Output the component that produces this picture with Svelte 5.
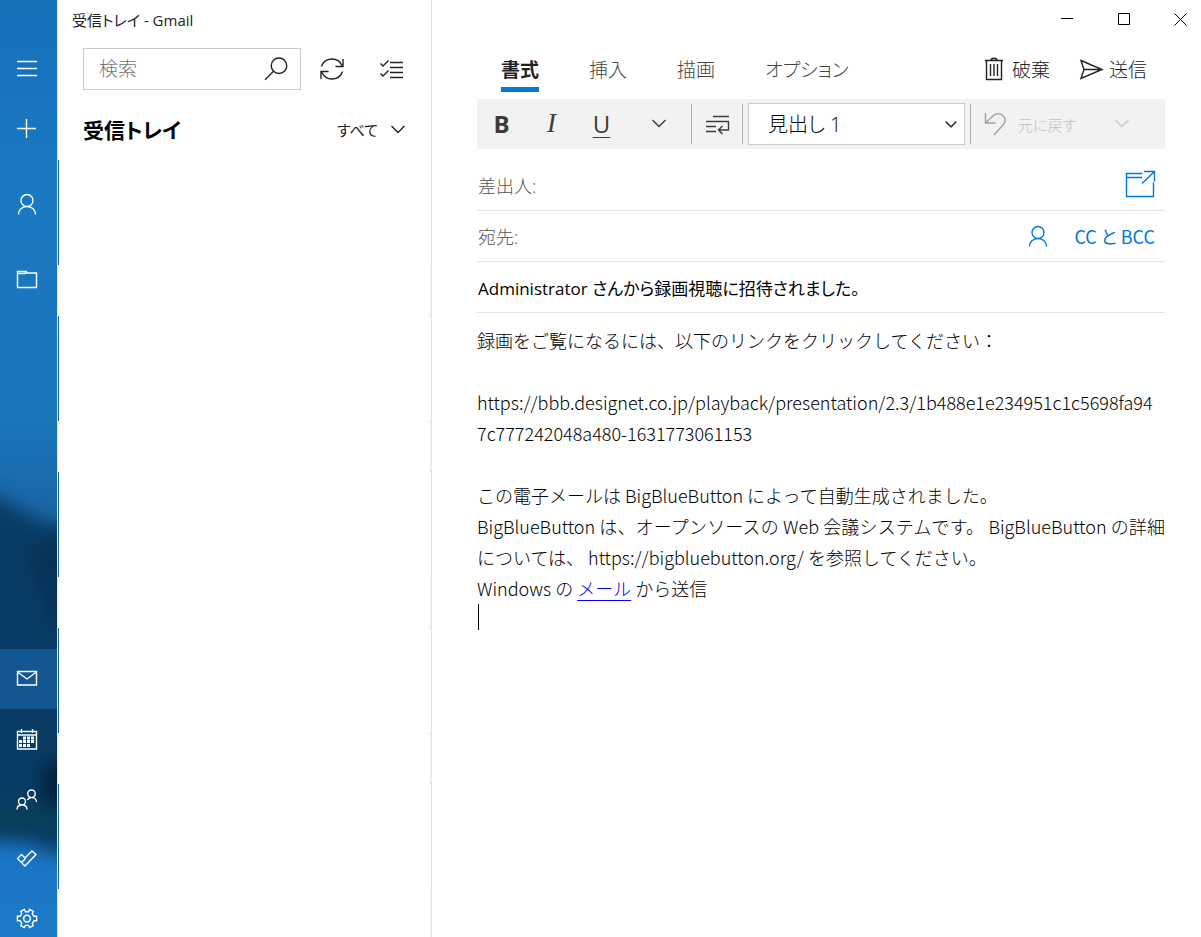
<script lang="ts">
  type IconName = keyof typeof icons;

  type RailItem = {
    label: string;
    icon: IconName;
    active?: boolean;
  };

  // every icon is drawn on a 32px grid
  const icons = {
    menu: "M6 9.500h20M6 16.500h20M6 23.500h20",
    add: "M6 16.500h19M15.500 7v19",
    person:
      "M16 6.500a6 6 0 1 1 0 12a6 6 0 1 1 0 -12M7.500 26.500c0 -4.500 3.500 -8 8.500 -8s8.500 3.500 8.500 8",
    folder: "M6.500 7.500h9v1.500h10v14.500h-19zM6.500 9.500h7.500l1.500 -1",
    mail: "M6.500 8.500h19v13.500h-19zM6.500 9l9.500 7l9.500 -7",
    calendar: "M6.500 8.500h19v17.500h-19zM6.500 12h19M10.500 6v4M21.500 6v4",
    people:
      "M11 15a3.500 3.500 0 1 1 0 7a3.500 3.500 0 1 1 0 -7M6 26.500c0 -3 2 -4.500 5 -4.500s5 1.500 5 4.500M20.500 7a3.500 3.500 0 1 1 0 7.500a3.500 3.500 0 1 1 0 -7.500M16.500 17c.800 -1.700 2 -2.500 4 -2.500c3 0 5 2 5 4.500",
    todo: "M6.500 15.500l4 -4l3.500 3.500l7 -7l4 3.500l-11 11.500zM10.500 19.500l4 -4",
    settings:
      "M13.300 6.500l1.200 2.200h3l1.200 -2.200l3.500 1.900l-.900 2.400l1.600 2.500h2.700v4.500h-2.700l-1.600 2.500l.900 2.400l-3.500 1.900l-1.200 -2.200h-3l-1.200 2.200l-3.500 -1.900l.900 -2.400l-1.600 -2.500h-2.700v-4.500h2.700l1.600 -2.500l-.900 -2.400zM16 12.200a3.400 3.400 0 1 1 0 6.800a3.400 3.400 0 1 1 0 -6.800",
    search:
      "M19 5a7.700 7.700 0 1 1 0 15.500a7.700 7.700 0 1 1 0 -15.500M13.500 18.300l-8.500 8.500",
    sync: "M5.500 13.500a11 11 0 0 1 20.500 -1M27 6v7.500h-7.500M26.500 18.500a11 11 0 0 1 -20.500 1M5 26v-7.500h7.500",
    select:
      "M14 9.500h13M14 14.500h13M14 19.500h13M14 24.500h13M4.500 10.500l2.500 2.500l5.500 -5.500M4.500 20.500l2.500 2.500l5.500 -5.500",
    down: "M9.500 13l6.500 6.500l6.500 -6.500",
    trash:
      "M8 7.500h18M9.500 7.500v19h15v-19M14 7.500c0 -3 6 -3 6 0M13.500 11v12M17 11v12M20.500 11v12",
    send: "M7 7.500l21 9l-21 9l3 -9zM10 16.500h18",
    wrap: "M12 9.500h16M5 14.500h23M5 19.500h10M5 24.500h10M27.500 14.500v8.500h-9.500M21.500 19l-4 4l4 4",
    undo: "M6.500 5v10h10M6.500 15l8 -7.500c6 -5 15 1.500 10 9l-9.500 10.500",
    popout:
      "M18.500 6.500h-16v23h27v-14M2.500 10.500h15.500M20 4.500h10.500v10M30.500 4.500l-12.500 12",
  };

  const topItems: RailItem[] = [
    { label: "メニュー", icon: "menu" },
    { label: "メールの新規作成", icon: "add" },
    { label: "アカウント", icon: "person" },
    { label: "フォルダー", icon: "folder" },
  ];

  const bottomItems: RailItem[] = [
    { label: "メール", icon: "mail", active: true },
    { label: "カレンダー", icon: "calendar" },
    { label: "連絡先", icon: "people" },
    { label: "To Do", icon: "todo" },
    { label: "設定", icon: "settings" },
  ];

  const tabs = ["書式", "挿入", "描画", "オプション"];
  let activeTab = $state("書式");

  let subject = $state("Administrator さんから録画視聴に招待されました。");
</script>

{#snippet icon(name: IconName)}
  <svg class="icon" viewBox="0 0 32 32" aria-hidden="true">
    <path d={icons[name]} />
    {#if name === "calendar"}
      <path
        class="dots"
        d="M12 15h12M8 18.500h16M8 22.500h12"
      />
    {/if}
  </svg>
{/snippet}

<div class="app">
  <nav class="rail">
    <svg class="wallpaper" viewBox="0 0 57 937" preserveAspectRatio="none" aria-hidden="true">
      <defs>
        <linearGradient id="sky" x1="0" y1="0" x2="0" y2="1">
          <stop offset="0" stop-color="#1670ba" />
          <stop offset="0.200" stop-color="#1a78c3" />
          <stop offset="0.450" stop-color="#1a75b9" />
          <stop offset="0.560" stop-color="#1964a4" />
          <stop offset="0.900" stop-color="#1a74c2" />
          <stop offset="1" stop-color="#1c7aca" />
        </linearGradient>
        <filter
          id="soft"
          filterUnits="userSpaceOnUse"
          x="-100"
          y="420"
          width="260"
          height="500"
          color-interpolation-filters="sRGB"
        >
          <feGaussianBlur stdDeviation="9" />
        </filter>
      </defs>
      <rect width="57" height="937" fill="url(#sky)" />
      <g filter="url(#soft)">
        <path d="M-60 480L0 499L30 515L50 524L120 530V862L50 852L30 842L-60 836z" fill="#093c64" />
      </g>
      <g filter="url(#soft)">
        <path d="M25 550L90 530V650L50 620z" fill="#073256" />
        <path d="M42 765L90 755V812H44z" fill="#03213a" />
        <path d="M-30 806H90V828L-30 830z" fill="#0a4058" />
      </g>
    </svg>
    <div class="group">
      {#each topItems as item (item.label)}
        <button aria-label={item.label}>{@render icon(item.icon)}</button>
      {/each}
    </div>
    <div class="group apps">
      {#each bottomItems as item (item.label)}
        <button class:active={item.active} aria-label={item.label}>
          {@render icon(item.icon)}
        </button>
      {/each}
    </div>
  </nav>

  <section class="list">
    <header class="title">受信トレイ - Gmail</header>
    <div class="search-row">
      <label class="search">
        <input type="text" placeholder="検索" aria-label="検索" />
        {@render icon("search")}
      </label>
      <button aria-label="同期">{@render icon("sync")}</button>
      <button aria-label="選択モード">{@render icon("select")}</button>
    </div>
    <div class="folder-row">
      <h1>受信トレイ</h1>
      <button class="filter">すべて {@render icon("down")}</button>
    </div>
    <ul class="messages">
      {#each Array(5) as _}
        <li></li>
      {/each}
    </ul>
  </section>

  <main class="compose">
    <div class="window-controls">
      <button aria-label="最小化">
        <svg viewBox="0 0 13 13"><path d="M0 5.500h12" /></svg>
      </button>
      <button aria-label="最大化">
        <svg viewBox="0 0 13 13"><path d="M.500 .500h11v11h-11z" /></svg>
      </button>
      <button aria-label="閉じる">
        <svg viewBox="0 0 13 13"><path d="M.500 .500l12 12M12.500 .500l-12 12" /></svg>
      </button>
    </div>

    <div class="editor">
      <div class="tab-row">
        {#each tabs as tab (tab)}
          <button
            class="tab"
            class:active={tab === activeTab}
            onclick={() => (activeTab = tab)}
          >
            {tab}
          </button>
        {/each}
        <div class="actions">
          <button>{@render icon("trash")}破棄</button>
          <button>{@render icon("send")}送信</button>
        </div>
      </div>

      <div class="toolbar">
        <button class="tool bold">B</button>
        <button class="tool italic">I</button>
        <button class="tool underline">U</button>
        <button class="tool more" aria-label="フォントの書式設定">{@render icon("down")}</button>
        <span class="divider"></span>
        <button class="tool" aria-label="段落の書式設定">{@render icon("wrap")}</button>
        <span class="divider"></span>
        <div class="style-picker">
          <select aria-label="スタイル">
            <option>見出し 1</option>
          </select>
          {@render icon("down")}
        </div>
        <span class="divider"></span>
        <button class="undo" disabled>{@render icon("undo")}元に戻す</button>
        <button class="tool history" disabled aria-label="履歴">{@render icon("down")}</button>
      </div>

      <div class="field from">
        <label for="from">差出人:</label>
        <input id="from" type="text" />
        <button class="popout" aria-label="新しいウィンドウで開く">{@render icon("popout")}</button>
      </div>
      <div class="field">
        <label for="to">宛先:</label>
        <input id="to" type="text" />
        <button aria-label="連絡先の選択">{@render icon("person")}</button>
        <button class="cc">CC と BCC</button>
      </div>
      <div class="field subject">
        <input type="text" aria-label="件名" bind:value={subject} />
      </div>

      <div class="body">
        <p>録画をご覧になるには、以下のリンクをクリックしてください：</p>
        <br />
        <p class="link">
          https://bbb.designet.co.jp/playback/presentation/2.3/1b488e1e234951c1c5698fa947c777242048a480-1631773061153
        </p>
        <br />
        <p>この電子メールは BigBlueButton によって自動生成されました。</p>
        <p>
          BigBlueButton は、オープンソースの Web 会議システムです。 BigBlueButton の詳細<span class="phrase">については、</span>
          https://bigbluebutton.org/ を参照してください。
        </p>
        <p>Windows の <a href="#mail">メール</a> から送信</p>
        <span class="caret"></span>
      </div>
    </div>
  </main>
</div>

<style>
  :global(body) {
    background: #fff;
  }

  .app {
    display: grid;
    grid-template-columns: 57px 375px 1fr;
    min-height: 100vh;
    color: #222;
    font-family: "Open Sans", "Noto Sans CJK JP", sans-serif;
    font-feature-settings: "palt";
    font-size: 18px;
  }

  button,
  input,
  select {
    font: inherit;
    font-feature-settings: inherit;
    color: inherit;
    border: 0;
    padding: 0;
    margin: 0;
    background: transparent;
    outline: none;
  }

  button {
    display: flex;
    align-items: center;
    justify-content: center;
  }

  .icon {
    width: 32px;
    height: 32px;
    flex: none;
    fill: none;
    stroke: currentColor;
    stroke-width: 1.4;
  }

  .dots {
    stroke-width: 3;
    stroke-dasharray: 3 1;
  }

  .rail {
    position: relative;
    display: flex;
    flex-direction: column;
    justify-content: space-between;
    color: #fff;
  }

  .wallpaper {
    position: absolute;
    width: 100%;
    height: 100%;
  }

  .group {
    position: relative;
    display: flex;
    flex-direction: column;
    padding-top: 38px;
  }

  .group button {
    width: 100%;
    height: 60px;
    padding-right: 3px;
  }

  .group:not(.apps) button:nth-child(n + 3) {
    margin-top: 16px;
  }

  .apps button.active {
    background: #125792;
  }

  .apps button:last-child {
    height: 48px;
    padding-top: 12px;
  }

  .list {
    display: flex;
    flex-direction: column;
    overflow: hidden;
    border-right: 1px solid #e3e3e3;
    border-left: 1px solid #e6e6e6;
    box-sizing: border-box;
  }

  .title {
    height: 40px;
    padding-left: 14px;
    font-size: 15px;
    line-height: 40px;
  }

  .search-row {
    display: flex;
    align-items: center;
    gap: 28px;
    padding: 8px 23px 0 25px;
  }

  .search {
    display: flex;
    flex: 1;
    align-items: center;
    min-width: 0;
    height: 40px;
    margin-right: -13px;
    padding: 0 8px 0 15px;
    border: 1px solid #ccc;
  }

  .search input {
    flex: 1;
    min-width: 0;
    height: 40px;
    font-size: 19px;
    font-weight: 300;
  }

  .search input::placeholder {
    color: #767676;
    opacity: 1;
  }

  .folder-row {
    display: flex;
    align-items: center;
    justify-content: space-between;
    height: 70px;
    padding: 8px 17px 0 25px;
    box-sizing: border-box;
  }

  h1 {
    margin: 0;
    color: #000;
    font-size: 21px;
    font-weight: 700;
  }

  .filter {
    gap: 4px;
    font-size: 15px;
  }

  .messages {
    flex: 1;
    margin: 0;
    padding: 0;
    list-style: none;
  }

  .messages li {
    position: relative;
    height: 105px;
    margin-bottom: 51px;
    border-left: 1px solid #1565ac;
  }

  .messages li:last-child {
    margin-bottom: 0;
  }

  .messages li::after {
    content: "";
    position: absolute;
    top: 105px;
    right: 0;
    width: 2px;
    height: 49px;
    border: solid #e3e3e3;
    border-width: 1px 0;
    background: #f9f9f9;
  }

  .compose {
    min-width: 0;
  }

  .window-controls {
    display: flex;
    justify-content: flex-end;
    height: 40px;
  }

  .window-controls button {
    width: 57px;
    height: 38px;
    padding-left: 2px;
  }

  .window-controls button:last-child {
    width: 49px;
    padding-left: 8px;
  }

  .window-controls svg {
    width: 13px;
    height: 13px;
    fill: none;
    stroke: #000;
  }

  .editor {
    margin: 0 36px 0 45px;
  }

  .tab-row {
    display: flex;
    gap: 50px;
    height: 59px;
    padding: 0 18px 0 24px;
    font-size: 19px;
    font-weight: 300;
  }

  .tab {
    height: 52px;
    padding-top: 10px;
    border-bottom: 5px solid transparent;
    color: #444;
    box-sizing: border-box;
  }

  .tab.active {
    border-color: #0078d7;
    color: #222;
    font-weight: 700;
  }

  .actions {
    display: flex;
    gap: 24px;
    height: 58px;
    margin-left: auto;
  }

  .actions button {
    gap: 3px;
  }

  .toolbar {
    display: flex;
    align-items: center;
    height: 50px;
    background: #f2f2f2;
    color: #3b3b3b;
  }

  .tool {
    width: 50px;
    height: 50px;
    padding: 0 1px 2px 0;
    font-size: 24px;
  }

  .bold {
    font-weight: 700;
  }

  .italic {
    font-family: "Liberation Serif", serif;
    font-size: 27px;
    font-style: italic;
  }

  .underline {
    text-decoration: underline;
    text-decoration-thickness: 1px;
    text-underline-offset: 4px;
  }

  .more {
    width: 64px;
  }

  .divider {
    width: 1px;
    height: 40px;
    background: #b0b0b0;
  }

  .style-picker {
    display: flex;
    flex: 0 1 217px;
    align-items: center;
    height: 42px;
    margin: 0 5px;
    border: 1px solid #ccc;
    background: #fff;
    box-sizing: border-box;
  }

  .style-picker select {
    flex: 1;
    height: 40px;
    margin-right: -32px;
    padding-left: 19px;
    appearance: none;
    color: #000;
    font-size: 20px;
    font-weight: 300;
  }

  .style-picker .icon {
    width: 26px;
    height: 26px;
    stroke-width: 2;
  }

  .undo {
    gap: 7px;
    margin-left: 8px;
    color: #c0c0c0;
    font-size: 15px;
    font-weight: 300;
  }

  .undo .icon {
    color: #a0a0a0;
  }

  .history {
    margin-left: auto;
    margin-right: 18px;
    color: #c8c8c8;
  }

  .field {
    display: flex;
    align-items: center;
    height: 50px;
    padding-left: 1px;
    border-bottom: 1px solid #e3e3e3;
    color: #0078d7;
  }

  .field.from {
    height: 51px;
    padding-top: 10px;
  }

  .field label {
    color: #555;
    font-weight: 300;
  }

  .field input {
    flex: 1;
    min-width: 0;
    height: 40px;
    color: #000;
  }

  .field.subject {
    font-size: 17px;
  }

  .cc {
    margin: 0 10px 0 20px;
    font-family: "Noto Sans CJK JP", sans-serif;
  }

  .popout {
    margin: -3px 9px 0 0;
  }

  .body {
    padding-top: 12px;
    color: #000;
    font-family: "Noto Sans CJK JP", sans-serif;
    font-feature-settings: normal;
    font-size: 18px;
    font-weight: 300;
    line-height: 31px;
  }

  .body p {
    margin: 0;
    text-align: justify;
  }

  .body .link {
    padding-right: 8px;
    text-align: left;
    word-break: break-all;
  }

  .body .phrase {
    white-space: nowrap;
  }

  .body a {
    color: #00f;
    text-underline-offset: 4px;
  }

  .caret {
    display: block;
    width: 1px;
    height: 26px;
    margin-left: 1px;
    background: #000;
  }
</style>
